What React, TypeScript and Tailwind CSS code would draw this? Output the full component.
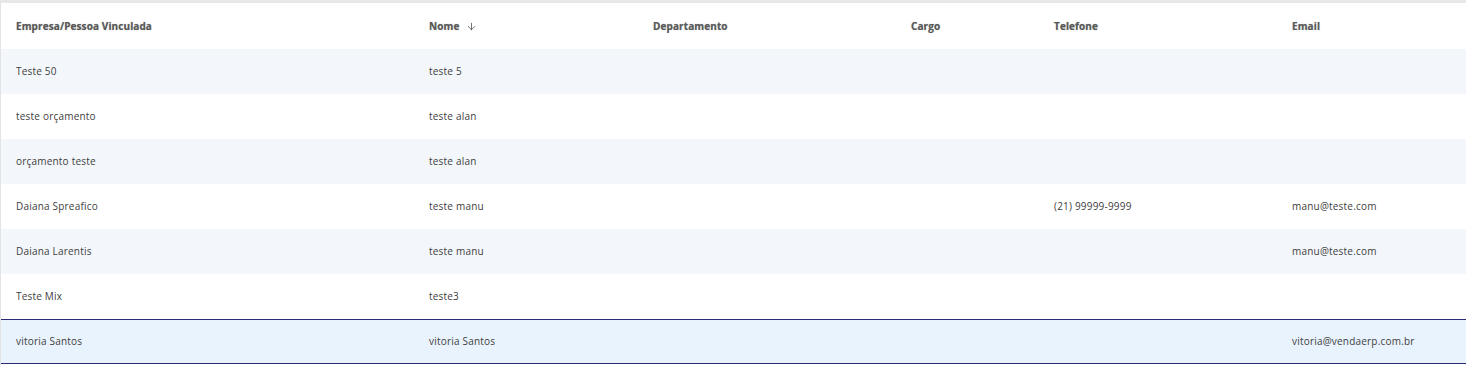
import React from 'react';
import { ArrowDown } from 'lucide-react';

const rows = [
  { empresa: 'Teste 50', nome: 'teste 5', departamento: '', cargo: '', telefone: '', email: '' },
  { empresa: 'teste orçamento', nome: 'teste alan', departamento: '', cargo: '', telefone: '', email: '' },
  { empresa: 'orçamento teste', nome: 'teste alan', departamento: '', cargo: '', telefone: '', email: '' },
  { empresa: 'Daiana Spreafico', nome: 'teste manu', departamento: '', cargo: '', telefone: '(21) 99999-9999', email: 'manu@teste.com' },
  { empresa: 'Daiana Larentis', nome: 'teste manu', departamento: '', cargo: '', telefone: '', email: 'manu@teste.com' },
  { empresa: 'Teste Mix', nome: 'teste3', departamento: '', cargo: '', telefone: '', email: '' },
  { empresa: 'vitoria Santos', nome: 'vitoria Santos', departamento: '', cargo: '', telefone: '', email: 'vitoria@vendaerp.com.br' },
];

const cols = 'grid grid-cols-[413px_224px_258px_143px_238px_1fr]';

export default function App() {
  return (
    <div className="w-[1466px] h-[365px] bg-white font-['Open_Sans',sans-serif] overflow-hidden">
      <div className="h-[3px] bg-[#e8e8e8]" />
      <div className="border-l border-[#e3e3e3] h-[362px]">
        {/* Header */}
        <div className={`${cols} h-[46px] items-center pt-[1px] text-[10px] font-bold tracking-[0.1px] text-[#585858] [text-shadow:0_0_1px_rgba(0,0,0,0.35)]`}>
          <div className="pl-[15px]">Empresa/Pessoa Vinculada</div>
          <div className="pl-[15px] flex items-center gap-[7px]">
            <span>Nome</span>
            <ArrowDown className="w-[11px] h-[11px] text-[#333]" strokeWidth={1.5} />
          </div>
          <div className="pl-[15px]">Departamento</div>
          <div className="pl-[15px]">Cargo</div>
          <div className="pl-[15px]">Telefone</div>
          <div className="pl-[15px]">Email</div>
        </div>

        {/* Rows */}
        {rows.map((r, i) => {
          const last = i === rows.length - 1;
          const bg = last ? 'bg-[#e9f3fd] border-y border-[#2d2a74]' : i % 2 === 0 ? 'bg-[#f3f7fb]' : 'bg-white';
          return (
            <div key={i} className={`${cols} h-[45px] items-center text-[10px] tracking-[0.2px] text-[#404040] ${bg}`}>
              <div className="pl-[15px]">{r.empresa}</div>
              <div className="pl-[15px]">{r.nome}</div>
              <div className="pl-[15px]">{r.departamento}</div>
              <div className="pl-[15px]">{r.cargo}</div>
              <div className="pl-[15px]">{r.telefone}</div>
              <div className="pl-[15px]">{r.email}</div>
            </div>
          );
        })}
      </div>
    </div>
  );
}
